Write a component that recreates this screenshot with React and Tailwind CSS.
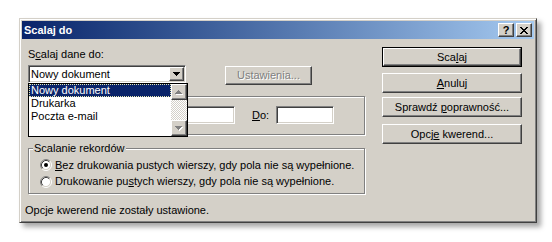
import React from "react";

const raised =
  "bg-[#d4d0c8] border border-white border-r-[#404040] border-b-[#404040] shadow-[inset_-1px_-1px_#808080]";
const sunken =
  "bg-white border border-[#808080] border-r-white border-b-white shadow-[inset_1px_1px_#404040,inset_-1px_-1px_#d4d0c8]";
const etched = "border border-[#808080] shadow-[inset_1px_1px_#ffffff,1px_1px_#ffffff]";

function DownArrow({ color = "#000", shadow = false }) {
  return (
    <svg width="8" height="5" viewBox="0 0 8 5" className="block">
      {shadow && (
        <path d="M1 1h7v1H1zM2 2h5v1H2zM3 3h3v1H3zM4 4h1v1H4z" fill="#ffffff" />
      )}
      <path d="M0 0h7v1H0zM1 1h5v1H1zM2 2h3v1H2zM3 3h1v1H3z" fill={color} />
    </svg>
  );
}

function UpArrow({ color = "#808080" }) {
  return (
    <svg width="8" height="5" viewBox="0 0 8 5" className="block">
      <path d="M4 1h1v1H4zM3 2h3v1H3zM2 3h5v1H2zM1 4h7v1H1z" fill="#ffffff" />
      <path d="M3 0h1v1H3zM2 1h3v1H2zM1 2h5v1H1zM0 3h7v1H0z" fill={color} />
    </svg>
  );
}

function Radio({ checked }) {
  return (
    <svg width="12" height="12" viewBox="0 0 12 12" className="block shrink-0">
      <circle cx="6" cy="6" r="4.5" fill="#ffffff" />
      <path d="M2.11 9.89 A5.5 5.5 0 0 1 9.89 2.11" stroke="#808080" fill="none" />
      <path d="M9.89 2.11 A5.5 5.5 0 0 1 2.11 9.89" stroke="#ffffff" fill="none" />
      <path d="M2.82 9.18 A4.5 4.5 0 0 1 9.18 2.82" stroke="#404040" fill="none" />
      <path d="M9.18 2.82 A4.5 4.5 0 0 1 2.82 9.18" stroke="#d4d0c8" fill="none" />
      {checked && <circle cx="6" cy="6" r="2" fill="#000000" />}
    </svg>
  );
}

function Btn({ children, isDefault, disabled, className = "" }) {
  const inner = (
    <div
      className={`${raised} h-full w-full flex items-center justify-center leading-[13px] ${
        disabled ? "text-[#808080] [text-shadow:1px_1px_#ffffff]" : "text-black"
      }`}
    >
      <span>{children}</span>
    </div>
  );
  if (isDefault) {
    return <div className={`border border-black ${className}`}>{inner}</div>;
  }
  return <div className={className}>{inner}</div>;
}

export default function App() {
  return (
    <div className="w-[552px] h-[242px] bg-white pt-[18px] pl-[19px] font-['Liberation_Sans',Arial,sans-serif] text-[11px] text-black">
      <div className="w-[518px] h-[205px] bg-[#d4d0c8] border border-[#d4d0c8] border-r-[#404040] border-b-[#404040] p-[2px] shadow-[inset_1px_1px_#ffffff,inset_-1px_-1px_#808080,4px_4px_5px_rgba(0,0,0,0.35)]">
        {/* Title bar */}
        <div className="h-[18px] flex items-center bg-linear-to-r from-[#0a246a] to-[#a6caf0] pl-[2px] pr-[2px]">
          <span className="flex-1 text-white font-bold text-[11px] leading-[13px]">Scalaj do</span>
          <div className={`${raised} w-[16px] h-[14px] flex items-center justify-center font-bold text-[11px] leading-none`}>
            ?
          </div>
          <div className={`${raised} ml-[2px] w-[16px] h-[14px] flex items-center justify-center`}>
            <svg width="8" height="7" viewBox="0 0 8 7" className="block">
              <path
                d="M0 0h2v1H0zM6 0h2v1H6zM1 1h2v1H1zM5 1h2v1H5zM2 2h4v1H2zM3 3h2v1H3zM2 4h4v1H2zM1 5h2v1H1zM5 5h2v1H5zM0 6h2v1H0zM6 6h2v1H6z"
                fill="#000"
              />
            </svg>
          </div>
        </div>

        {/* Body */}
        <div className="flex px-[6px]">
          {/* Left column */}
          <div className="w-[337px] pt-[9px]">
            <div className="leading-[13px]">
              S<u>c</u>alaj dane do:
            </div>
            <div className="flex items-start mt-[4px]">
              <div className="relative w-[158px] h-[18px]">
                <div className={`${sunken} h-full flex items-center`}>
                  <span className="flex-1 pl-[2px] leading-[13px]">Nowy dokument</span>
                  <div className={`${raised} w-[15px] h-[14px] mr-[1px] flex items-center justify-center`}>
                    <DownArrow />
                  </div>
                </div>
                {/* Open dropdown list */}
                <div className="absolute left-0 top-full z-10 w-[160px] h-[54px] bg-white border border-black flex">
                  <div className="flex-1 flex flex-col">
                    <div className="h-[13px] bg-[#0a246a] text-white border border-dotted border-[#e8e8b0] leading-[11px] pl-[1px]">
                      Nowy dokument
                    </div>
                    <div className="h-[13px] leading-[13px] pl-[2px]">Drukarka</div>
                    <div className="h-[13px] leading-[13px] pl-[2px]">Poczta e-mail</div>
                  </div>
                  <div className="w-[16px] flex flex-col">
                    <div className={`${raised} h-[16px] flex items-center justify-center`}>
                      <UpArrow />
                    </div>
                    <div className="flex-1 bg-[repeating-conic-gradient(#d4d0c8_0%_25%,#ffffff_0%_50%)] bg-[length:2px_2px]" />
                    <div className={`${raised} h-[16px] flex items-center justify-center`}>
                      <DownArrow color="#808080" shadow />
                    </div>
                  </div>
                </div>
              </div>
              <Btn disabled className="ml-[39px] mt-[1px] w-[87px] h-[19px]">
                Ustawienia...
              </Btn>
            </div>

            {/* Group box 1 (partly covered by the list) */}
            <div className={`${etched} mt-[11px] h-[39px] pt-[9px]`}>
              <div className="flex items-center pl-[124px]">
                <span className="w-[24px] leading-[13px]">
                  <u>O</u>d:
                </span>
                <div className={`${sunken} w-[58px] h-[18px]`} />
                <span className="ml-[17px] w-[24px] leading-[13px]">
                  <u>D</u>o:
                </span>
                <div className={`${sunken} w-[58px] h-[18px]`} />
              </div>
            </div>

            {/* Group box 2 */}
            <div className={`${etched} relative mt-[13px] h-[46px] pt-[8px] pl-[11px]`}>
              <span className="absolute left-[4px] top-[-7px] px-[1px] bg-[#d4d0c8] leading-[13px]">
                Scalanie rekordów
              </span>
              <div className="h-[16px] flex items-center">
                <Radio checked />
                <span className="ml-[3px] leading-[13px]">
                  <u>B</u>ez drukowania pustych wierszy, gdy pola nie są wypełnione.
                </span>
              </div>
              <div className="h-[17px] flex items-center">
                <Radio />
                <span className="ml-[3px] leading-[13px]">
                  Drukowanie pu<u>s</u>tych wierszy, gdy pola nie są wypełnione.
                </span>
              </div>
            </div>
          </div>

          {/* Right column */}
          <div className="ml-[17px] w-[140px] pt-[8px] flex flex-col">
            <Btn isDefault className="h-[20px]">
              Sca<u>l</u>aj
            </Btn>
            <Btn className="mt-[6px] h-[20px]">
              <u>A</u>nuluj
            </Btn>
            <Btn className="mt-[4px] h-[20px]">
              Sprawdź <u>p</u>oprawność...
            </Btn>
            <Btn className="mt-[7px] h-[20px]">
              Opcj<u>e</u> kwerend...
            </Btn>
          </div>
        </div>

        {/* Status */}
        <div className="mt-[10px] pl-[3px] leading-[13px]">Opcje kwerend nie zostały ustawione.</div>
      </div>
    </div>
  );
}
